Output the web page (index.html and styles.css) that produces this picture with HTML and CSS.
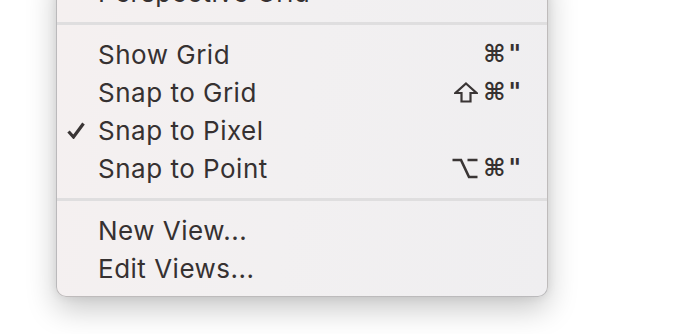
FILE: index.html
```html
<!DOCTYPE html>
<html lang="en">
<head>
    <meta charset="UTF-8">
    <meta name="viewport" content="width=device-width, initial-scale=1.0">
    <title>View Menu</title>
    <link rel="stylesheet" href="styles.css">
</head>
<body>
    <div class="menu">
        <div class="menu-item">
            <span class="check"></span>
            <span class="label">Perspective Grid</span>
            <span class="shortcut">
                <svg class="key" width="10" height="16" viewBox="0 0 10 16"><path d="M2 2 L8 8 L2 14" fill="none" stroke="#3a3535" stroke-width="2"/></svg>
            </span>
        </div>

        <div class="separator"></div>

        <div class="menu-item">
            <span class="check"></span>
            <span class="label">Show Grid</span>
            <span class="shortcut"><span class="cmd">⌘</span>"</span>
        </div>
        <div class="menu-item">
            <span class="check"></span>
            <span class="label">Snap to Grid</span>
            <span class="shortcut">
                <!-- shift key -->
                <svg class="key" width="24" height="21" viewBox="0 0 24 21"><path d="M12 1.5 L22.5 11 L16.5 11 L16.5 19.5 L7.5 19.5 L7.5 11 L1.5 11 Z" fill="none" stroke="#3a3535" stroke-width="2.2" stroke-linejoin="miter"/></svg>
                <span class="cmd">⌘</span>"
            </span>
        </div>
        <div class="menu-item">
            <span class="check">
                <svg width="18" height="17" viewBox="0 0 18 17"><path d="M1.5 9.5 L6.5 15 L16.5 1.5" fill="none" stroke="#3a3535" stroke-width="3.2"/></svg>
            </span>
            <span class="label">Snap to Pixel</span>
            <span class="shortcut"></span>
        </div>
        <div class="menu-item">
            <span class="check"></span>
            <span class="label">Snap to Point</span>
            <span class="shortcut">
                <!-- option key -->
                <svg class="key" width="26" height="21" viewBox="0 0 26 21"><path d="M0.5 2 H9 L17 19 H25.5 M15.5 2 H25.5" fill="none" stroke="#3a3535" stroke-width="2.6"/></svg>
                <span class="cmd">⌘</span>"
            </span>
        </div>

        <div class="separator"></div>

        <div class="menu-item">
            <span class="check"></span>
            <span class="label">New View...</span>
            <span class="shortcut"></span>
        </div>
        <div class="menu-item">
            <span class="check"></span>
            <span class="label">Edit Views...</span>
            <span class="shortcut"></span>
        </div>
    </div>
</body>
</html>
```

FILE: styles.css
```css
html, body {
    height: 100%;
}

body {
    margin: 0;
    background: #ffffff;
    font-family: Inter, Roboto, "Liberation Sans", sans-serif;
}

.menu {
    margin-top: -32px;
    margin-left: 56px;
    width: 492px;
    padding: 4px 0 9px 0;
    box-sizing: border-box;
    background: linear-gradient(100deg, #f5f0f0 0%, #f2f0f1 50%, #efeef0 100%);
    border: 1px solid rgba(0, 0, 0, 0.22);
    border-radius: 10px;
    box-shadow: 0 12px 30px rgba(0, 0, 0, 0.22), 0 0 10px rgba(0, 0, 0, 0.08);
}

.menu-item {
    display: flex;
    align-items: center;
    height: 38px;
    padding-right: 26px;
    color: #363131;
    font-size: 26px;
    letter-spacing: 0.5px;
}

.check {
    width: 41px;
    padding-left: 10px;
    box-sizing: border-box;
    display: flex;
    align-items: center;
}

.label {
    flex: 1;
}

.shortcut {
    display: flex;
    align-items: center;
    font-family: "DejaVu Sans", sans-serif;
    font-size: 24px;
    font-weight: bold;
    letter-spacing: 0;
}

.cmd {
    margin-right: 3px;
}

.key {
    display: block;
    margin-right: 5px;
}

.separator {
    height: 3px;
    margin: 11px 0 10px 0;
    background: #dfdedf;
}
```
